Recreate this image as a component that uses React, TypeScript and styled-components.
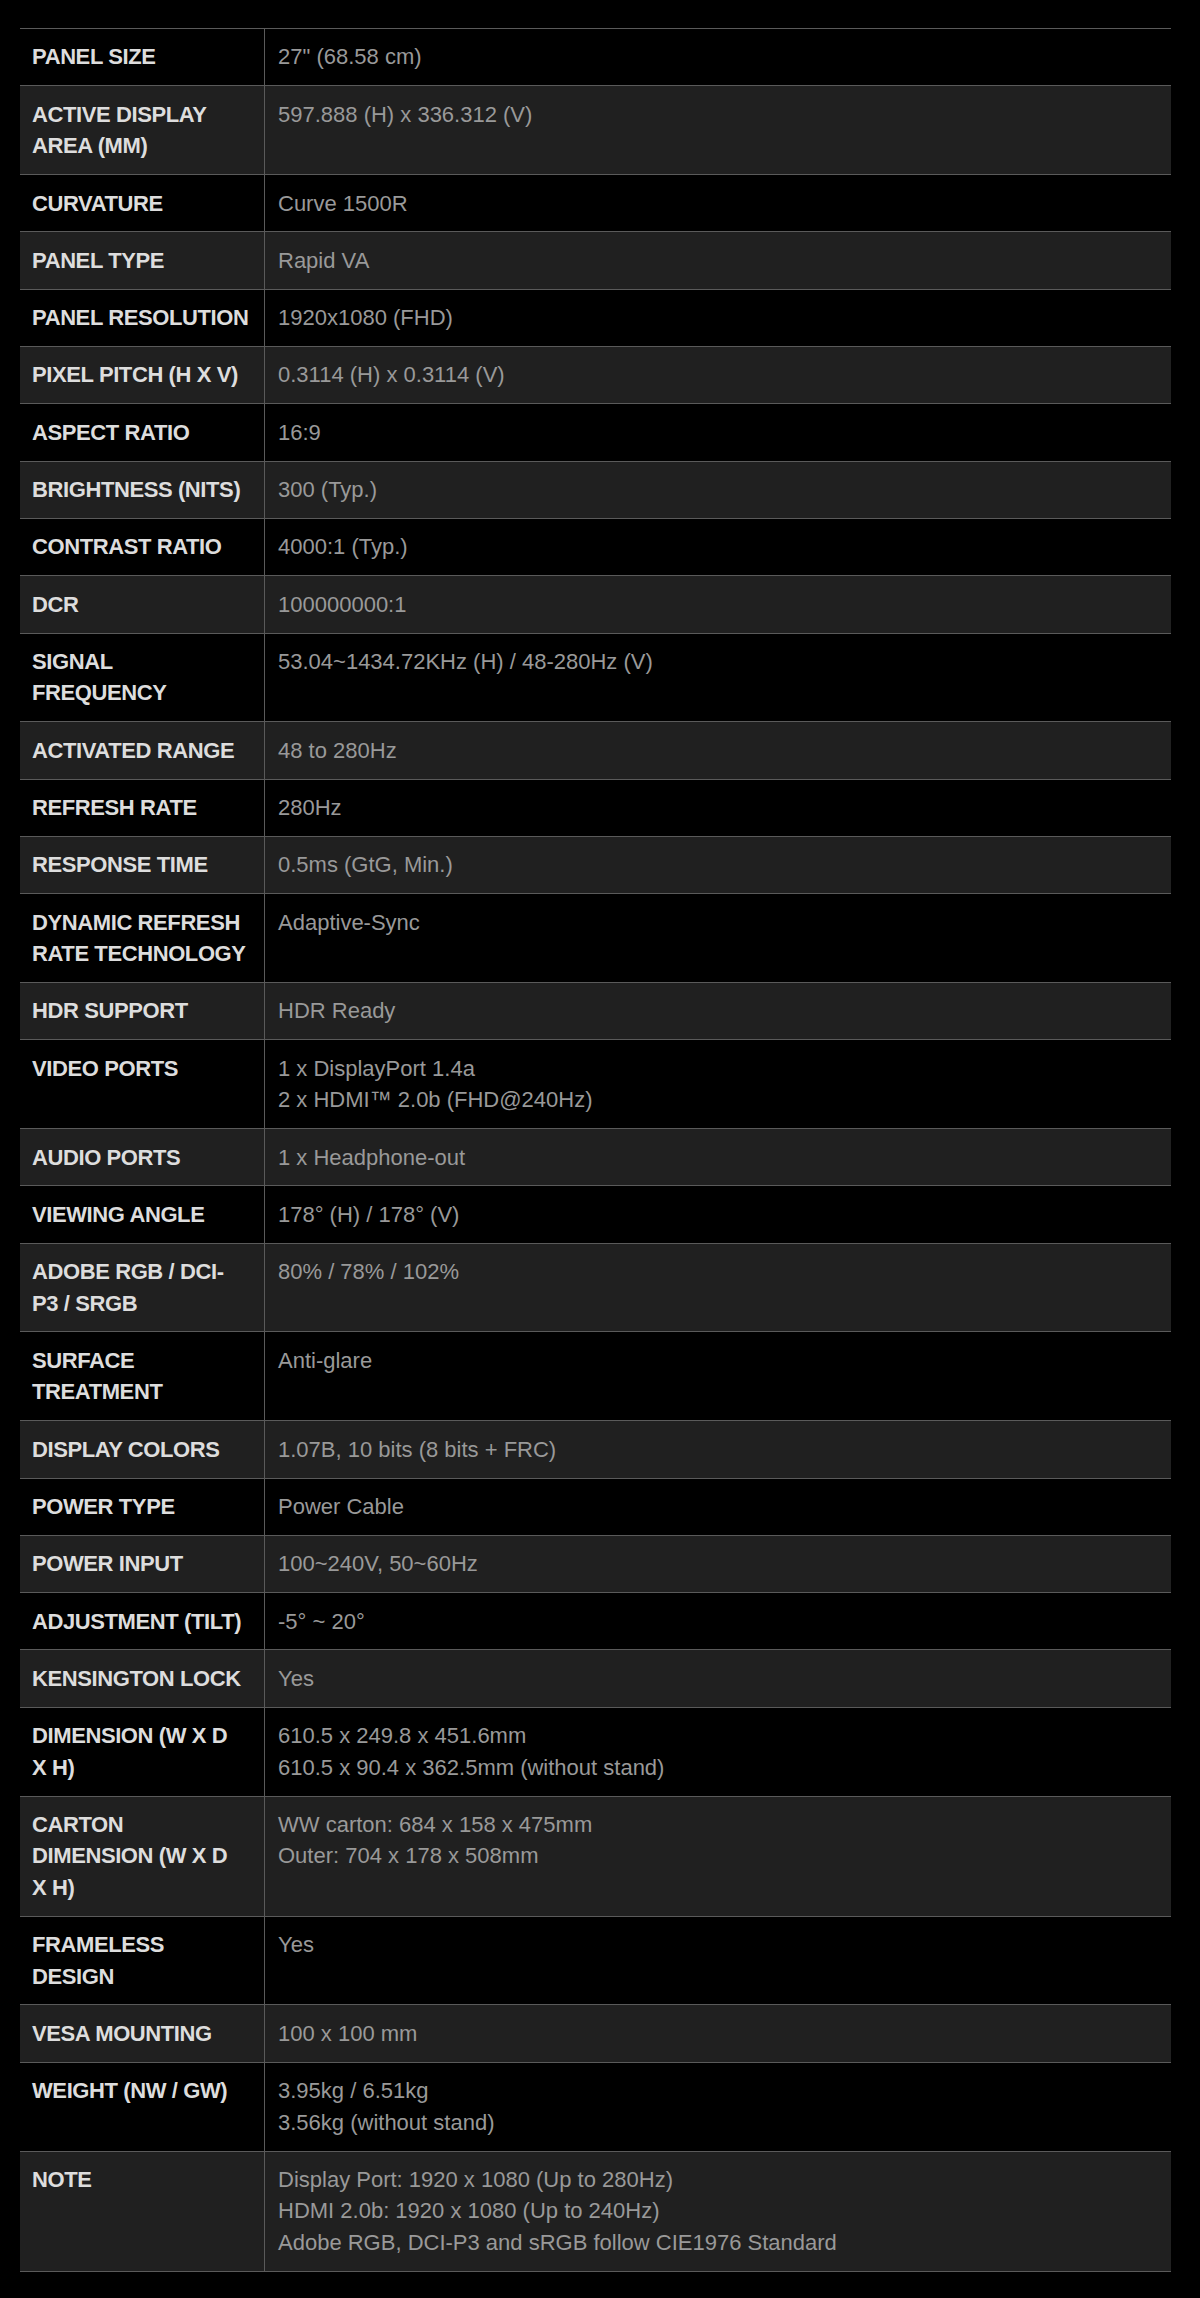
import React from "react";
import styled, { createGlobalStyle } from "styled-components";

const GlobalStyle = createGlobalStyle`
  html, body {
    margin: 0;
    padding: 0;
    background: #000;
  }
  body {
    font-family: "Liberation Sans", Arial, Helvetica, sans-serif;
    -webkit-font-smoothing: antialiased;
  }
`;

const Page = styled.div`
  background: #000;
  min-height: 2298px;
  padding: 28px 29px 0 20px;
  box-sizing: border-box;
`;

const SpecTable = styled.div`
  display: flex;
  flex-direction: column;
  width: 1151px;
  border-bottom: 1px solid #5a5a5a;
`;

const Row = styled.div<{ $alt: boolean }>`
  display: grid;
  grid-template-columns: 245px 1fr;
  border-top: 1px solid #5a5a5a;
  background: ${(p) => (p.$alt ? "#202020" : "#000")};
`;

const Label = styled.div`
  box-sizing: border-box;
  padding: 12.45px 12px 12.45px 12px;
  border-right: 1px solid #5a5a5a;
  font-size: 22px;
  line-height: 31.43px;
  font-weight: 700;
  color: #dddddd;
  white-space: nowrap;
  letter-spacing: -0.4px;
`;

const Value = styled.div`
  box-sizing: border-box;
  padding: 12.45px 12px 12.45px 13px;
  font-size: 22px;
  line-height: 31.43px;
  font-weight: 400;
  color: #999999;
`;

type Spec = { label: string[]; value: string[] };

const specs: Spec[] = [
  { label: ["PANEL SIZE"], value: ['27" (68.58 cm)'] },
  { label: ["ACTIVE DISPLAY", "AREA (MM)"], value: ["597.888 (H) x 336.312 (V)"] },
  { label: ["CURVATURE"], value: ["Curve 1500R"] },
  { label: ["PANEL TYPE"], value: ["Rapid VA"] },
  { label: ["PANEL RESOLUTION"], value: ["1920x1080 (FHD)"] },
  { label: ["PIXEL PITCH (H X V)"], value: ["0.3114 (H) x 0.3114 (V)"] },
  { label: ["ASPECT RATIO"], value: ["16:9"] },
  { label: ["BRIGHTNESS (NITS)"], value: ["300 (Typ.)"] },
  { label: ["CONTRAST RATIO"], value: ["4000:1 (Typ.)"] },
  { label: ["DCR"], value: ["100000000:1"] },
  { label: ["SIGNAL", "FREQUENCY"], value: ["53.04~1434.72KHz (H) / 48-280Hz (V)"] },
  { label: ["ACTIVATED RANGE"], value: ["48 to 280Hz"] },
  { label: ["REFRESH RATE"], value: ["280Hz"] },
  { label: ["RESPONSE TIME"], value: ["0.5ms (GtG, Min.)"] },
  { label: ["DYNAMIC REFRESH", "RATE TECHNOLOGY"], value: ["Adaptive-Sync"] },
  { label: ["HDR SUPPORT"], value: ["HDR Ready"] },
  { label: ["VIDEO PORTS"], value: ["1 x DisplayPort 1.4a", "2 x HDMI\u2122 2.0b (FHD@240Hz)"] },
  { label: ["AUDIO PORTS"], value: ["1 x Headphone-out"] },
  { label: ["VIEWING ANGLE"], value: ["178\u00b0 (H) / 178\u00b0 (V)"] },
  { label: ["ADOBE RGB / DCI-", "P3 / SRGB"], value: ["80% / 78% / 102%"] },
  { label: ["SURFACE", "TREATMENT"], value: ["Anti-glare"] },
  { label: ["DISPLAY COLORS"], value: ["1.07B, 10 bits (8 bits + FRC)"] },
  { label: ["POWER TYPE"], value: ["Power Cable"] },
  { label: ["POWER INPUT"], value: ["100~240V, 50~60Hz"] },
  { label: ["ADJUSTMENT (TILT)"], value: ["-5\u00b0 ~ 20\u00b0"] },
  { label: ["KENSINGTON LOCK"], value: ["Yes"] },
  {
    label: ["DIMENSION (W X D", "X H)"],
    value: ["610.5 x 249.8 x 451.6mm", "610.5 x 90.4 x 362.5mm (without stand)"],
  },
  {
    label: ["CARTON", "DIMENSION (W X D", "X H)"],
    value: ["WW carton: 684 x 158 x 475mm", "Outer: 704 x 178 x 508mm"],
  },
  { label: ["FRAMELESS", "DESIGN"], value: ["Yes"] },
  { label: ["VESA MOUNTING"], value: ["100 x 100 mm"] },
  { label: ["WEIGHT (NW / GW)"], value: ["3.95kg / 6.51kg", "3.56kg (without stand)"] },
  {
    label: ["NOTE"],
    value: [
      "Display Port: 1920 x 1080 (Up to 280Hz)",
      "HDMI 2.0b: 1920 x 1080 (Up to 240Hz)",
      "Adobe RGB, DCI-P3 and sRGB follow CIE1976 Standard",
    ],
  },
];

const Lines: React.FC<{ lines: string[] }> = ({ lines }) => (
  <>
    {lines.map((l, i) => (
      <React.Fragment key={i}>
        {i > 0 && <br />}
        {l}
      </React.Fragment>
    ))}
  </>
);

export default function App() {
  return (
    <>
      <GlobalStyle />
      <Page>
        <SpecTable>
          {specs.map((s, i) => (
            <Row key={i} $alt={i % 2 === 1}>
              <Label>
                <Lines lines={s.label} />
              </Label>
              <Value>
                <Lines lines={s.value} />
              </Value>
            </Row>
          ))}
        </SpecTable>
      </Page>
    </>
  );
}
